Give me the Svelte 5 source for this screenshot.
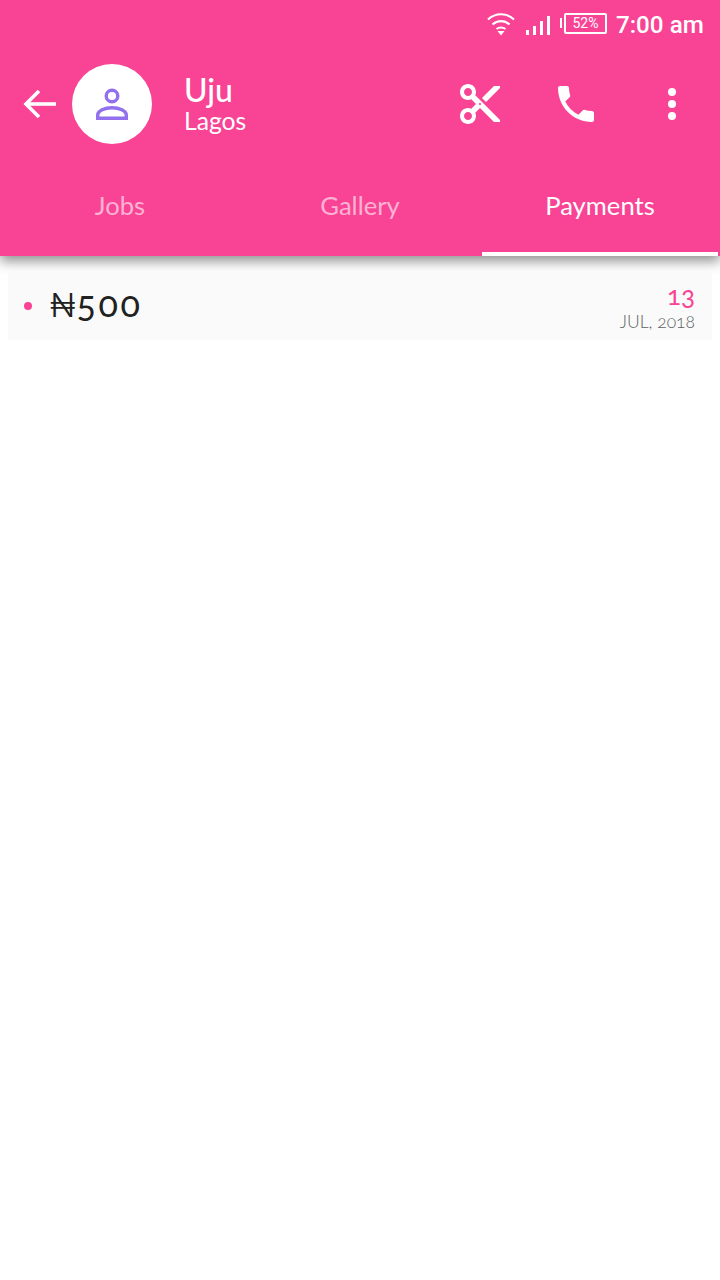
<script>
  let tabs = ['Jobs', 'Gallery', 'Payments'];
  let active = 2;
</script>

<div class="screen">
  <header class="appbar">
    <div class="status">
      <svg class="wifi" width="30" height="24" viewBox="0 0 30 24" fill="none" stroke="#fff" stroke-width="2.200">
        <path d="M2 7.500C9.500 .5 20.500 .5 28 7.500" />
        <path d="M6.500 12.500C11.500 8 18.500 8 23.500 12.500" />
        <path d="M10.500 17C13 15 17 15 19.500 17" />
        <path d="M11.500 19h7L15 23.500z" fill="#fff" stroke="none" />
      </svg>
      <svg class="signal" width="25" height="20" viewBox="0 0 25 20" fill="#fff">
        <rect x="0" y="15" width="3" height="5" />
        <rect x="7" y="11" width="3" height="9" />
        <rect x="14" y="6" width="3" height="14" />
        <rect x="21" y="1" width="3" height="19" />
      </svg>
      <div class="battery">
        <span class="nub"></span>
        <span class="cell">52%</span>
      </div>
      <span class="time">7:00 am</span>
    </div>

    <div class="toolbar">
      <svg class="back" width="36" height="36" viewBox="0 0 36 36" fill="none" stroke="#fff" stroke-width="3.600">
        <path d="M36 18H6" />
        <path d="M19 5L6 18l13 13" />
      </svg>
      <div class="avatar">
        <svg width="40" height="40" viewBox="0 0 40 40" fill="none" stroke="#9270ee" stroke-width="3.400">
          <circle cx="20" cy="12" r="5.800" />
          <path d="M5.700 34.300v-3.300c0-4 7-7.300 14.300-7.300s14.300 3.300 14.300 7.300v3.300z" />
        </svg>
      </div>
      <div class="who">
        <div class="name">Uju</div>
        <div class="place">Lagos</div>
      </div>
      <div class="actions">
        <svg class="cut" width="48" height="48" viewBox="0 0 24 24" fill="#fff">
          <path d="M9.640 7.640c.23-.5.360-1.050.360-1.640 0-2.210-1.790-4-4-4S2 3.790 2 6s1.790 4 4 4c.59 0 1.140-.13 1.640-.36L10 12l-2.360 2.360C7.140 14.130 6.590 14 6 14c-2.210 0-4 1.790-4 4s1.790 4 4 4 4-1.790 4-4c0-.59-.13-1.140-.36-1.640L12 14l7 7h3v-1L9.640 7.640zM6 8c-1.100 0-2-.89-2-2s.9-2 2-2 2 .89 2 2-.9 2-2 2zm0 12c-1.100 0-2-.89-2-2s.9-2 2-2 2 .89 2 2-.9 2-2 2zm6-7.500c-.28 0-.5-.22-.5-.5s.22-.5.500-.5.500.22.500.5-.22.5-.5.5zM19 3l-6 6 2 2 7-7V3h-3z" />
        </svg>
        <svg class="phone" width="48" height="48" viewBox="0 0 24 24" fill="#fff">
          <path d="M6.620 10.790c1.440 2.830 3.760 5.140 6.590 6.590l2.200-2.200c.27-.27.670-.36 1.020-.24 1.120.37 2.330.57 3.570.57.550 0 1 .45 1 1V20c0 .55-.45 1-1 1-9.390 0-17-7.610-17-17 0-.55.450-1 1-1h3.500c.55 0 1 .45 1 1 0 1.250.2 2.450.57 3.570.11.350.03.740-.25 1.020l-2.200 2.200z" />
        </svg>
        <svg class="more" width="48" height="48" viewBox="0 0 24 24" fill="#fff">
          <circle cx="12" cy="6" r="2" />
          <circle cx="12" cy="12" r="2" />
          <circle cx="12" cy="18" r="2" />
        </svg>
      </div>
    </div>

    <nav class="tabs">
      {#each tabs as tab, i}
        <div class="tab" class:active={i === active}>{tab}</div>
      {/each}
    </nav>
  </header>

  <div class="list">
    <div class="row">
      <span class="dot"></span>
      <span class="amount"><span class="naira">₦</span>500</span>
      <div class="date">
        <div class="day">13</div>
        <div class="month">JUL, 2018</div>
      </div>
    </div>
  </div>
</div>

<style>
  :global(body) {
    margin: 0;
    background: #fff;
  }

  .screen {
    width: 720px;
    height: 1280px;
    overflow: hidden;
    font-family: Lato, "Noto Sans", sans-serif;
    font-variant-numeric: oldstyle-nums;
  }

  .appbar {
    height: 256px;
    background: #f94395;
    color: #fff;
    box-shadow: 0 5px 12px rgba(0, 0, 0, 0.45);
    display: flex;
    flex-direction: column;
  }

  .status {
    height: 48px;
    display: flex;
    align-items: center;
    justify-content: flex-end;
    padding-right: 16px;
  }

  .wifi {
    margin-right: 10px;
  }

  .signal {
    margin-right: 9px;
    margin-top: 1px;
  }

  .battery {
    display: flex;
    align-items: center;
    margin-right: 9px;
    margin-top: -2px;
  }

  .nub {
    width: 2px;
    height: 10px;
    background: #fff;
    margin-right: 2px;
  }

  .cell {
    width: 39px;
    height: 17px;
    border: 2px solid #fff;
    border-radius: 2px;
    font: 14px/17px Roboto, sans-serif;
    text-align: center;
  }

  .time {
    font: 500 24.200px/28px Roboto, sans-serif;
    width: 88px;
    white-space: nowrap;
    margin-top: 2px;
  }

  .toolbar {
    height: 112px;
    display: flex;
    align-items: center;
  }

  .back {
    margin-left: 20px;
    margin-right: 16px;
  }

  .avatar {
    width: 80px;
    height: 80px;
    border-radius: 50%;
    background: #fff;
    display: flex;
    align-items: center;
    justify-content: center;
  }

  .who {
    margin-left: 32px;
    flex: 1;
    padding-bottom: 2px;
  }

  .name {
    font-size: 32px;
    line-height: 36px;
    font-weight: 500;
  }

  .place {
    font-size: 24.700px;
    line-height: 26px;
  }

  .actions {
    display: flex;
    gap: 48px;
    padding-right: 24px;
  }

  .tabs {
    height: 96px;
    display: flex;
    padding: 0 2px;
  }

  .tab {
    width: 236px;
    box-sizing: border-box;
    display: flex;
    align-items: center;
    justify-content: center;
    font-size: 25.600px;
    color: rgba(255, 255, 255, 0.6);
    padding-bottom: 6px;
    margin-left: 4px;
  }

  .tab:first-child {
    margin-left: 0;
  }

  .tab.active {
    color: #fff;
    box-shadow: inset 0 -4px 0 #fff;
  }

  .list {
    padding: 16px 8px;
  }

  .row {
    height: 68px;
    background: #fafafa;
    display: flex;
    align-items: center;
    padding: 0 17px 0 16px;
  }

  .dot {
    width: 8px;
    height: 8px;
    border-radius: 50%;
    background: #f94395;
    margin-right: 18px;
  }

  .amount {
    flex: 1;
    font-size: 36px;
    line-height: 44px;
    letter-spacing: 2.500px;
    color: #212121;
    display: flex;
    align-items: baseline;
    margin-top: -4px;
  }

  .naira {
    font-family: Inter, sans-serif;
    font-weight: 300;
    font-size: 33px;
    letter-spacing: 1px;
  }

  .date {
    text-align: right;
    padding-top: 8px;
  }

  .day {
    font-size: 26px;
    line-height: 24px;
    color: #f94395;
  }

  .month {
    font-size: 17.500px;
    line-height: 30px;
    font-weight: 300;
    color: #5f5f5f;
  }
</style>
